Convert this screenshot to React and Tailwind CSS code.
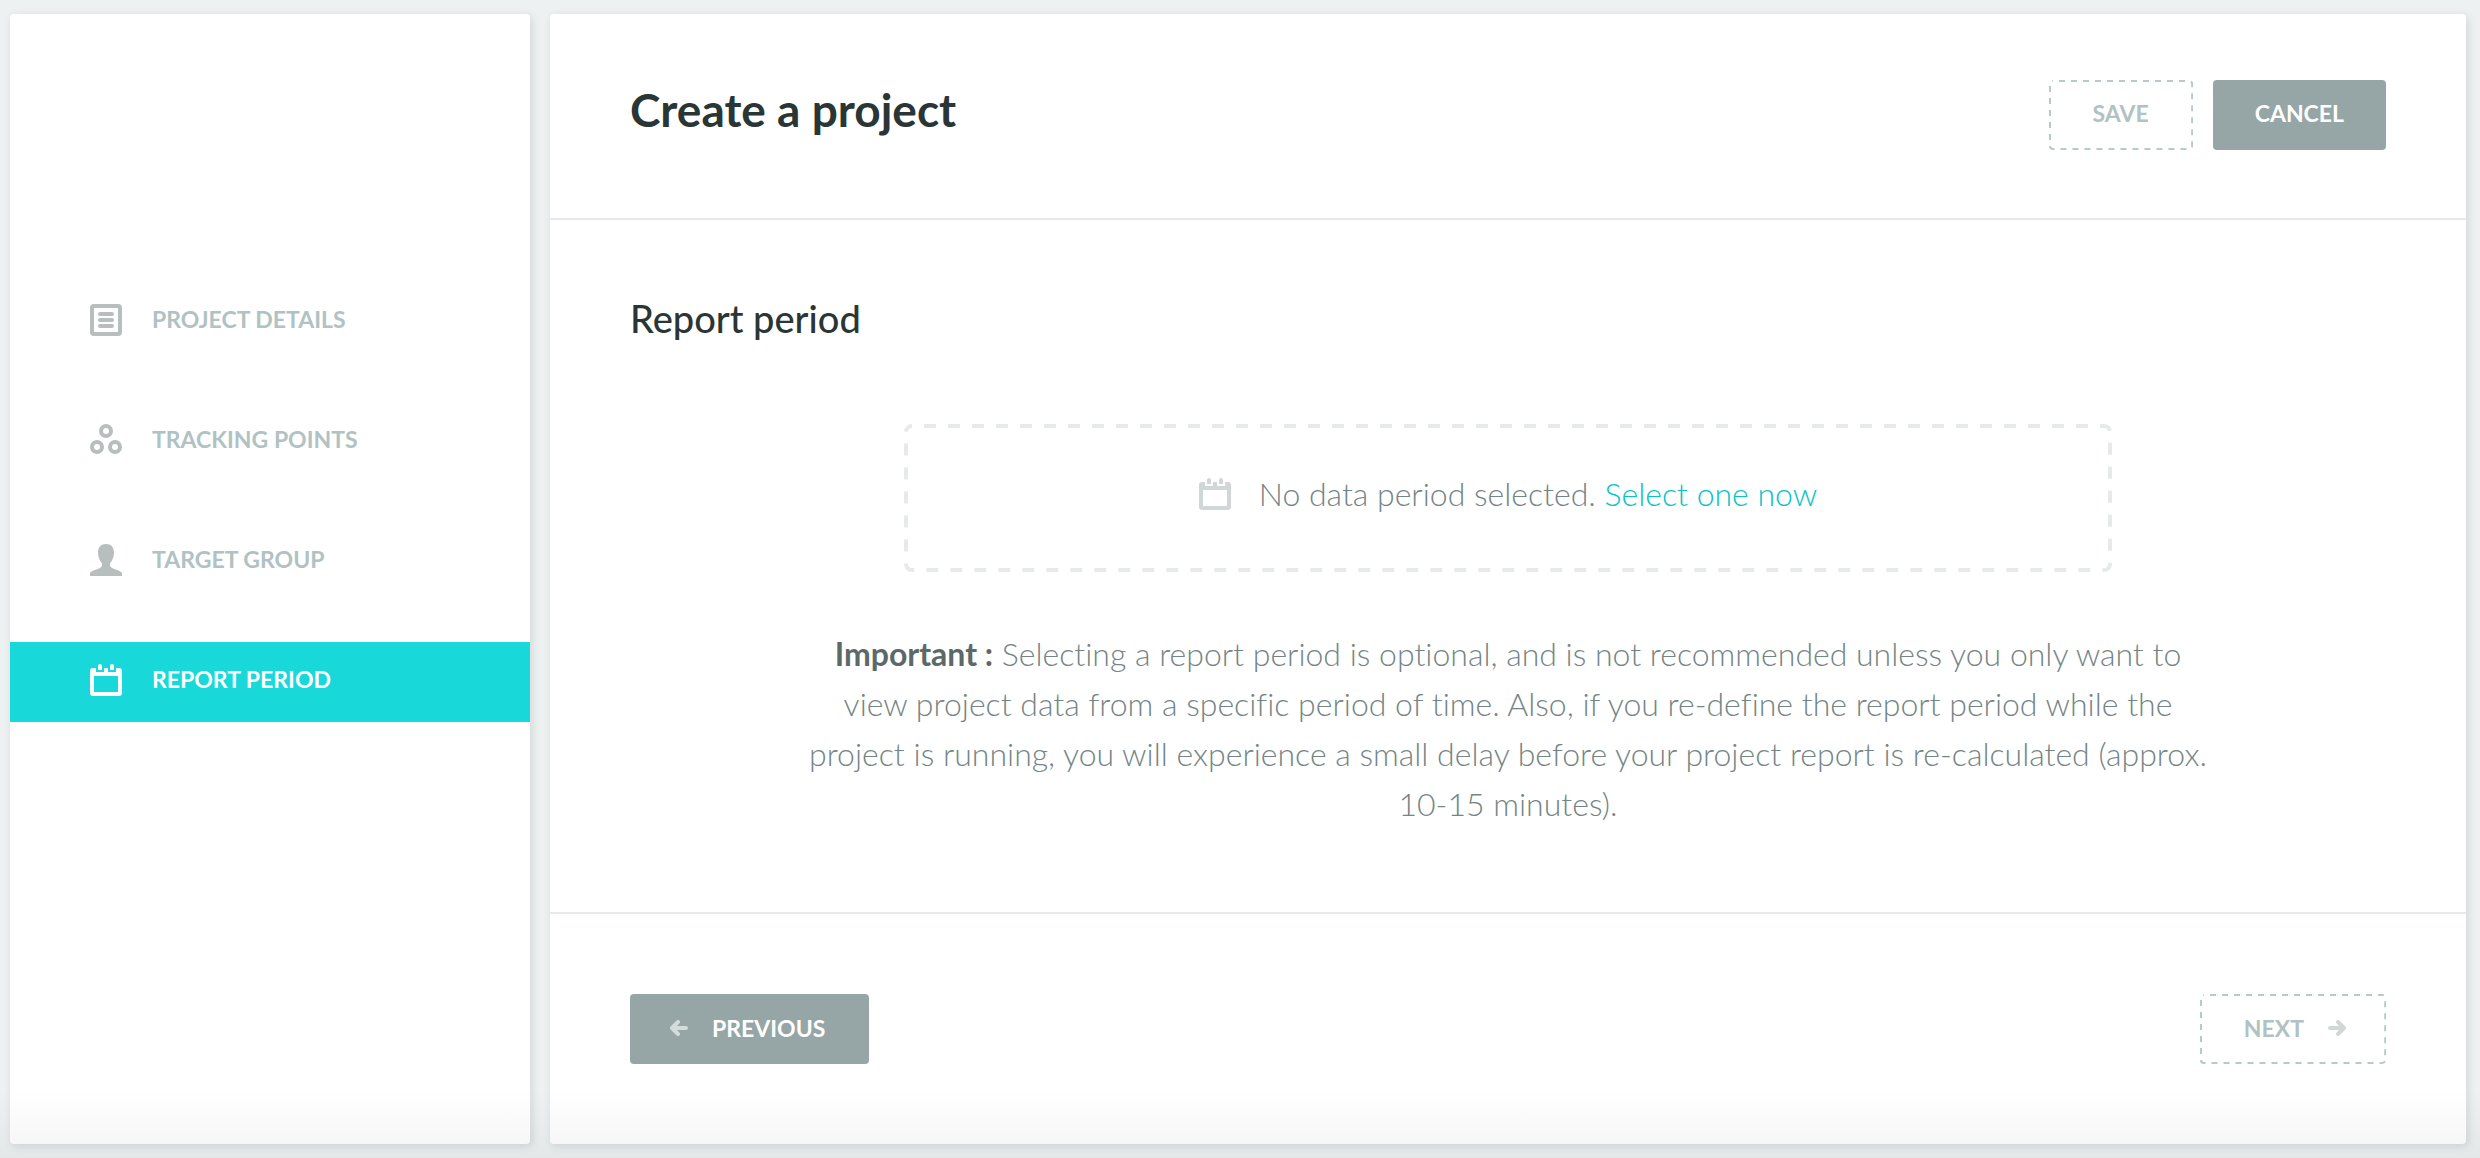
import React, { useState } from "react";

function DetailsIcon() {
  return (
    <svg viewBox="0 0 32 32" className="w-8 h-8 shrink-0" fill="none" stroke="currentColor" strokeWidth="4" aria-hidden="true">
      <rect x="2" y="2" width="28" height="28" rx="2" />
      <path d="M10 10h12M10 16h12M10 22h12" strokeLinecap="round" />
    </svg>
  );
}

function PointsIcon() {
  return (
    <svg viewBox="0 0 32 32" className="w-8 h-8 shrink-0" fill="none" stroke="currentColor" strokeWidth="4" aria-hidden="true">
      <circle cx="16" cy="7" r="5" />
      <circle cx="7" cy="23" r="5" />
      <circle cx="25" cy="23" r="5" />
    </svg>
  );
}

function PersonIcon() {
  return (
    <svg viewBox="0 0 32 32" className="w-8 h-8 shrink-0" fill="currentColor" aria-hidden="true">
      <path d="M16 0c5.200 0 8 3.400 8 8.600 0 4.200-1.400 7.900-4 10.600v2.400c0 1.100 1.500 2.200 3.600 3.100 3.400 1.300 8.400 2.500 8.400 4.900V32H0v-2.400c0-2.400 5-3.600 8.400-4.900 2.100-.9 3.600-2 3.600-3.100v-2.400c-2.600-2.700-4-6.400-4-10.600C8 3.400 10.800 0 16 0z" />
    </svg>
  );
}

function CalendarIcon() {
  return (
    <svg viewBox="0 0 32 32" className="w-8 h-8 shrink-0" fill="currentColor" aria-hidden="true">
      <path
        fillRule="evenodd"
        d="M3 4h3v4h8V4h4v4h8V4h3a3 3 0 0 1 3 3v22a3 3 0 0 1-3 3H3a3 3 0 0 1-3-3V7a3 3 0 0 1 3-3zM4 12v16h24V12z"
      />
      <path d="M8 6V2a2 2 0 0 1 4 0v4zM20 6V2a2 2 0 0 1 4 0v4z" />
    </svg>
  );
}

function ArrowLeft() {
  return (
    <svg viewBox="0 0 18 16" className="w-[18px] h-4 text-[#d5dbdb]" fill="none" stroke="currentColor" strokeWidth="4" strokeLinecap="round" strokeLinejoin="round" aria-hidden="true">
      <path d="M8 2 2 8l6 6M3 8h13" />
    </svg>
  );
}

function ArrowRight() {
  return (
    <svg viewBox="0 0 18 16" className="w-[18px] h-4 text-[#d1d7d6]" fill="none" stroke="currentColor" strokeWidth="4" strokeLinecap="round" strokeLinejoin="round" aria-hidden="true">
      <path d="m10 2 6 6-6 6M15 8H2" />
    </svg>
  );
}

// dashed outline with long, evenly spaced dashes
function ThinDashes() {
  return (
    <svg className="absolute inset-0 w-full h-full pointer-events-none" fill="none" stroke="#b8c9c9" strokeWidth="2" aria-hidden="true">
      <rect x="1" y="1" rx="3" className="w-[calc(100%-2px)] h-[calc(100%-2px)]" strokeDasharray="6 6" strokeDashoffset="6" />
    </svg>
  );
}

function ThickDashes() {
  return (
    <svg className="absolute inset-0 w-full h-full pointer-events-none" fill="none" stroke="#e6eaea" strokeWidth="4" aria-hidden="true">
      <rect x="2" y="2" rx="6" className="w-[calc(100%-4px)] h-[calc(100%-4px)]" strokeDasharray="12 12" strokeDashoffset="12" />
    </svg>
  );
}

const steps = [
  { label: "PROJECT DETAILS", icon: DetailsIcon },
  { label: "TRACKING POINTS", icon: PointsIcon },
  { label: "TARGET GROUP", icon: PersonIcon },
  { label: "REPORT PERIOD", icon: CalendarIcon },
];

export default function App() {
  const [active, setActive] = useState(3);

  return (
    <div className="relative min-h-screen flex gap-5 pl-[10px] pr-[14px] py-[14px] bg-[#edf1f2] font-['Lato',sans-serif] [font-variant-ligatures:none]">
      <aside className="w-[520px] shrink-0 bg-white rounded-sm pt-[268px] shadow-[2px_2px_8px_rgba(40,60,55,0.14)]">
        <nav className="flex flex-col gap-10">
          {steps.map(({ label, icon: Icon }, i) => (
            <button
              key={label}
              onClick={() => setActive(i)}
              className={
                i === active
                  ? "flex items-center gap-[30px] h-20 px-20 pb-1 bg-[#18d8da] text-white text-[23px] font-bold"
                  : "flex items-center gap-[30px] h-20 px-20 pb-1 text-[#b8bdbd] text-[23px] font-bold"
              }
            >
              <Icon />
              <span className={i === active ? "pb-[2px] text-white" : "pb-[2px] text-[#b0c2c2]"}>{label}</span>
            </button>
          ))}
        </nav>
      </aside>

      <main className="flex-1 flex flex-col bg-white rounded-sm shadow-[2px_2px_8px_rgba(40,60,55,0.14)]">
        <header className="flex items-start justify-between px-20 pt-[66px] pb-[68px] border-b-2 border-[#e6eaea]">
          <h1 className="text-[46px] leading-[60px] font-bold text-[#2a3635]">Create a project</h1>
          <div className="flex gap-5">
            <button className="relative h-[70px] px-11 pb-1 text-[23px] font-bold text-[#b0c2c2]">
              <ThinDashes />
              SAVE
            </button>
            <button className="h-[70px] px-[42px] pb-1 rounded-sm bg-[#96a5a5] text-[23px] font-bold text-white">
              CANCEL
            </button>
          </div>
        </header>

        <section className="flex-1 px-20 pt-[74px] pb-20 border-b-2 border-[#e6eaea]">
          <h2 className="text-[38px] leading-[48px] font-medium text-[#2a3635]">Report period</h2>

          <div className="relative mt-[82px] mx-auto max-w-[1208px] h-[148px] pb-2 flex items-center justify-center gap-7 text-[#d1d7d6]">
            <ThickDashes />
            <CalendarIcon />
            <p className="text-[32px] leading-[50px] font-light text-[#748585]">
              No data period selected.{" "}
              <a href="#select" className="text-[#06c3c6]">
                Select one now
              </a>
            </p>
          </div>

          <p className="mt-[57px] mx-auto w-4/5 text-center text-[32px] leading-[50px] font-light text-[#748585]">
            <strong className="font-bold text-[#5c6968]">Important :</strong> Selecting a report
            period is optional, and is not recommended unless you only want to view project data from a
            specific period of time. Also, if you re-define the report period while the project is
            running, you will experience a small delay before your project report is re-calculated
            (approx. 10-15 minutes).
          </p>
        </section>

        <footer className="flex items-start justify-between px-20 py-20">
          <button className="flex items-center gap-6 h-[70px] pl-10 pr-11 pb-[2px] rounded-sm bg-[#96a5a5] text-[23px] font-bold text-white">
            <ArrowLeft />
            PREVIOUS
          </button>
          <button className="relative flex items-center gap-6 h-[70px] pl-11 pr-10 pb-[2px] text-[23px] font-bold text-[#b0c2c2]">
            <ThinDashes />
            NEXT
            <ArrowRight />
          </button>
        </footer>
      </main>

      {/* soft shade along the bottom edge */}
      <div className="absolute inset-x-0 bottom-0 h-[70px] pointer-events-none bg-linear-to-b from-transparent to-black/4"></div>
    </div>
  );
}
